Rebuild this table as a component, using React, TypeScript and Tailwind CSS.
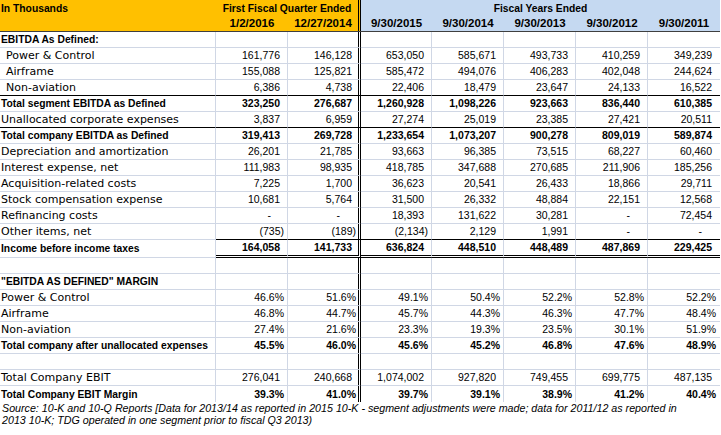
import React from 'react';

type Line = 'grid' | 'black' | 'blackData' | 'double' | 'none';

type Row = {
  label: string;
  bold?: boolean;
  indent?: boolean;
  v: string[];
  line?: Line;
};

const blank = ['', '', '', '', '', '', ''];

const rows: Row[] = [
  { label: 'EBITDA As Defined:', bold: true, v: blank },
  { label: 'Power & Control', indent: true, v: ['161,776', '146,128', '653,050', '585,671', '493,733', '410,259', '349,239'] },
  { label: 'Airframe', indent: true, v: ['155,088', '125,821', '585,472', '494,076', '406,283', '402,048', '244,624'] },
  { label: 'Non-aviation', indent: true, v: ['6,386', '4,738', '22,406', '18,479', '23,647', '24,133', '16,522'], line: 'black' },
  { label: 'Total segment EBITDA as Defined', bold: true, v: ['323,250', '276,687', '1,260,928', '1,098,226', '923,663', '836,440', '610,385'] },
  { label: 'Unallocated corporate expenses', v: ['3,837', '6,959', '27,274', '25,019', '23,385', '27,421', '20,511'], line: 'black' },
  { label: 'Total company EBITDA as Defined', bold: true, v: ['319,413', '269,728', '1,233,654', '1,073,207', '900,278', '809,019', '589,874'] },
  { label: 'Depreciation and amortization', v: ['26,201', '21,785', '93,663', '96,385', '73,515', '68,227', '60,460'] },
  { label: 'Interest expense, net', v: ['111,983', '98,935', '418,785', '347,688', '270,685', '211,906', '185,256'] },
  { label: 'Acquisition-related costs', v: ['7,225', '1,700', '36,623', '20,541', '26,433', '18,866', '29,711'] },
  { label: 'Stock compensation expense', v: ['10,681', '5,764', '31,500', '26,332', '48,884', '22,151', '12,568'] },
  { label: 'Refinancing costs', v: ['-', '-', '18,393', '131,622', '30,281', '-', '72,454'] },
  { label: 'Other items, net', v: ['(735)', '(189)', '(2,134)', '2,129', '1,991', '-', '-'], line: 'blackData' },
  { label: 'Income before income taxes', bold: true, v: ['164,058', '141,733', '636,824', '448,510', '448,489', '487,869', '229,425'], line: 'double' },
  { label: '', v: blank },
  { label: '"EBITDA AS DEFINED" MARGIN', bold: true, v: blank },
  { label: 'Power & Control', v: ['46.6%', '51.6%', '49.1%', '50.4%', '52.2%', '52.8%', '52.2%'] },
  { label: 'Airframe', v: ['46.8%', '44.7%', '45.7%', '44.3%', '46.3%', '47.7%', '48.4%'] },
  { label: 'Non-aviation', v: ['27.4%', '21.6%', '23.3%', '19.3%', '23.5%', '30.1%', '51.9%'] },
  { label: 'Total company after unallocated expenses', bold: true, v: ['45.5%', '46.0%', '45.6%', '45.2%', '46.8%', '47.6%', '48.9%'] },
  { label: '', v: blank },
  { label: 'Total Company EBIT', v: ['276,041', '240,668', '1,074,002', '927,820', '749,455', '699,775', '487,135'] },
  { label: 'Total Company EBIT Margin', bold: true, v: ['39.3%', '41.0%', '39.7%', '39.1%', '38.9%', '41.2%', '40.4%'], line: 'none' },
];

// per column: width + right border, then padding for number / paren-or-percent / dash
const cols = [
  { box: 'w-[72px] border-r border-r-[#d0d7e5]', num: 'pr-[7px]', tight: 'pr-[3px]', dash: 'pr-[16px]' },
  { box: 'w-[73px] border-r-[3px] border-r-black', num: 'pr-[6px]', tight: 'pr-[2px]', dash: 'pr-[18px]' },
  { box: 'w-[71px] border-r border-r-[#d0d7e5]', num: 'pr-[7px]', tight: 'pr-[3px]', dash: 'pr-[17px]' },
  { box: 'w-[72px] border-r border-r-[#d0d7e5]', num: 'pr-[7px]', tight: 'pr-[3px]', dash: 'pr-[17px]' },
  { box: 'w-[72px] border-r border-r-[#d0d7e5]', num: 'pr-[7px]', tight: 'pr-[3px]', dash: 'pr-[17px]' },
  { box: 'w-[72px] border-r border-r-[#d0d7e5]', num: 'pr-[7px]', tight: 'pr-[3px]', dash: 'pr-[17px]' },
  { box: 'w-[72px]', num: 'pr-[8px]', tight: 'pr-[4px]', dash: 'pr-[18px]' },
];

const bottom = (line: Line, isLabel: boolean) => {
  if (line === 'none') return 'h-4 border-b-0';
  if (line === 'double') return isLabel ? 'h-[18px] border-b border-b-[#d0d7e5]' : 'h-[18px] border-b-[3px] border-b-black';
  if (line === 'black') return 'h-4 border-b border-b-black';
  if (line === 'blackData') return isLabel ? 'h-4 border-b border-b-[#d0d7e5]' : 'h-4 border-b border-b-black';
  return 'h-4 border-b border-b-[#d0d7e5]';
};

const TableRow: React.FC<{ row: Row }> = ({ row }) => {
  const line = row.line || 'grid';
  return (
    <div className="flex">
      <div
        className={`w-[216px] border-r border-r-[#d0d7e5] border-double flex items-center whitespace-nowrap overflow-hidden ${bottom(line, true)} ${row.indent ? 'pl-[6px]' : 'pl-[1px]'} ${row.bold ? "font-['Liberation_Sans',sans-serif] font-bold text-[10.3px]" : "font-['DejaVu_Sans',sans-serif] text-[11px]"}`}
      >
        {row.label}
      </div>
      {row.v.map((val, i) => {
        const c = cols[i];
        const pad = val === '-' ? c.dash : val.startsWith('(') || val.endsWith('%') ? c.tight : c.num;
        return (
          <div
            key={i}
            className={`${c.box} border-double flex items-center justify-end whitespace-nowrap ${bottom(line, false)} ${pad} ${row.bold ? 'font-bold' : ''}`}
          >
            {val}
          </div>
        );
      })}
    </div>
  );
};

const App: React.FC = () => {
  return (
    <div className="w-[721px] h-[435px] bg-white text-black font-['Liberation_Sans',sans-serif] text-[10.5px] leading-[15px] overflow-hidden">
      <div className="flex h-8 w-[720px] border-b border-b-[#3f3f3f] font-bold">
        <div className="w-[361px] bg-[#ffc000] border-r-[3px] border-double border-r-black flex flex-col text-[10.3px]">
          <div className="flex h-4 items-center">
            <div className="w-[216px] pl-[1px]">In Thousands</div>
            <div className="flex-1 text-center">First Fiscal Quarter Ended</div>
          </div>
          <div className="flex h-[15px] items-center text-[11.5px]">
            <div className="w-[216px]" />
            <div className="w-[72px] text-center">1/2/2016</div>
            <div className="w-[70px] text-center">12/27/2014</div>
          </div>
        </div>
        <div className="flex-1 bg-[#c5d9f1] flex flex-col text-[10.3px]">
          <div className="h-4 flex items-center justify-center">Fiscal Years Ended</div>
          <div className="flex h-[15px] items-center text-[11.5px]">
            <div className="w-[71px] text-center">9/30/2015</div>
            <div className="w-[72px] text-center">9/30/2014</div>
            <div className="w-[72px] text-center">9/30/2013</div>
            <div className="w-[72px] text-center">9/30/2012</div>
            <div className="w-[72px] text-center">9/30/2011</div>
          </div>
        </div>
      </div>
      {rows.map((r, i) => (
        <TableRow key={i} row={r} />
      ))}
      <div className="pl-[2px] italic text-[10.7px] leading-[12px] whitespace-nowrap">
        Source: 10-K and 10-Q Reports [Data for 2013/14 as reported in 2015 10-K - segment adjustments were made; data for 2011/12 as reported in
        <br />
        2013 10-K; TDG operated in one segment prior to fiscal Q3 2013)
      </div>
    </div>
  );
};

export default App;
